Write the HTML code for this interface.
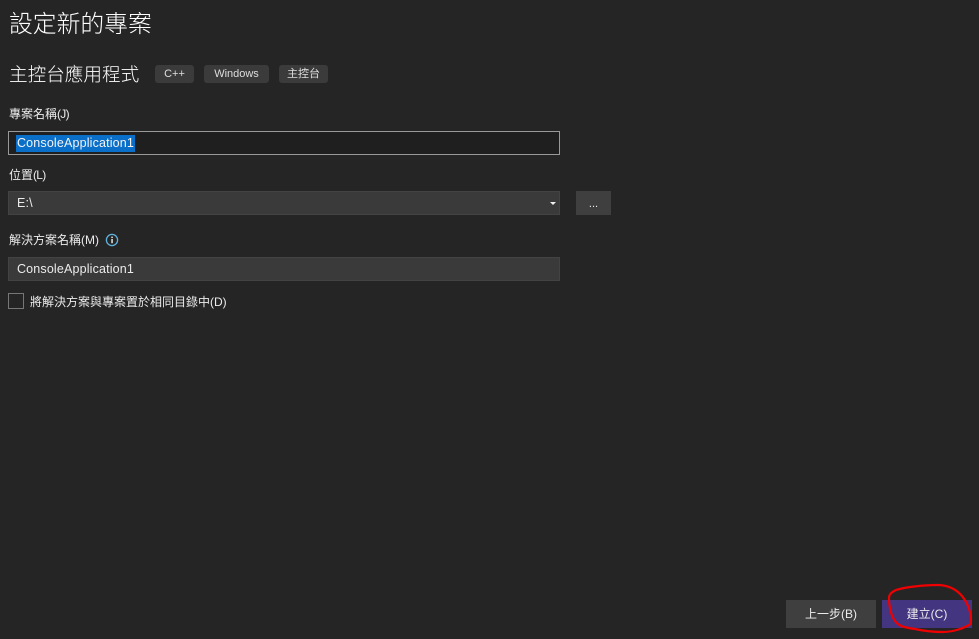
<!DOCTYPE html>
<html lang="zh-Hant">
<head>
<meta charset="utf-8">
<title>設定新的專案</title>
<style>
html,body{margin:0;padding:0;background:#252526;}
body{width:979px;height:639px;position:relative;overflow:hidden;color:#ececec;font-family:"Liberation Sans","Noto Sans CJK TC",sans-serif;font-size:12px;}
.a{position:absolute;white-space:nowrap;line-height:16px;}
.box{position:absolute;box-sizing:border-box;}
.p{letter-spacing:-.7px;}
.tag{position:absolute;top:65px;height:18px;background:#3b3b3c;border-radius:3px;text-align:center;line-height:18px;font-size:11px;color:#dedede;}
.btn{position:absolute;top:600px;height:28px;text-align:center;line-height:28px;color:#ececec;font-size:12px;}
.en{font-size:12.5px;letter-spacing:.16px;}
</style>
</head>
<body>
<div class="a" style="left:9px;top:11px;font-size:23.8px;line-height:28px;font-weight:300;color:#fff;">設定新的專案</div>
<div class="a" style="left:9px;top:64px;font-size:18.6px;line-height:22px;font-weight:300;color:#fff;">主控台應用程式</div>
<div class="tag" style="left:155px;width:39px;">C++</div>
<div class="tag" style="left:204px;width:65px;">Windows</div>
<div class="tag" style="left:279px;width:49px;">主控台</div>

<div class="a" style="left:9px;top:106px;">專案名稱<span class="p">(J)</span></div>
<div class="box" style="left:8px;top:131px;width:552px;height:24px;background:#1f1f1f;border:1px solid #999;"></div>
<div class="a en" style="left:16px;top:135px;height:17px;width:119px;padding-left:1px;box-sizing:border-box;background:#0a6fc9;color:#f4f4f4;line-height:16px;">ConsoleApplication1</div>

<div class="a" style="left:9px;top:167px;">位置<span class="p">(L)</span></div>
<div class="box" style="left:8px;top:191px;width:552px;height:24px;background:#3a3a3b;border:1px solid #434346;"></div>
<div class="a en" style="left:17px;top:195px;">E:\</div>
<div class="box" style="left:550px;top:202px;width:0;height:0;border-left:3px solid transparent;border-right:3px solid transparent;border-top:3px solid #f1f1f1;"></div>
<div class="box" style="left:576px;top:191px;width:35px;height:24px;background:#3f3f40;text-align:center;line-height:27px;font-size:11px;">...</div>

<div class="a" style="left:9px;top:232px;">解決方案名稱(M)</div>
<svg class="box" style="left:105px;top:233px;" width="14" height="14" viewBox="0 0 14 14">
<circle cx="7" cy="7" r="5.6" fill="none" stroke="#5fb4dc" stroke-width="1.3"/>
<rect x="6.3" y="6" width="1.5" height="4.2" fill="#e6e6e6"/>
<rect x="6.3" y="3.6" width="1.5" height="1.5" fill="#e6e6e6"/>
</svg>
<div class="box" style="left:8px;top:257px;width:552px;height:24px;background:#3a3a3b;border:1px solid #434346;"></div>
<div class="a en" style="left:17px;top:261px;">ConsoleApplication1</div>

<div class="box" style="left:8px;top:293px;width:16px;height:16px;background:#252526;border:1px solid #777;"></div>
<div class="a" style="left:30px;top:294px;">將解決方案與專案置於相同目錄中(D)</div>

<div class="btn" style="left:786px;width:90px;background:#3f3f40;">上一步(B)</div>
<div class="btn" style="left:882px;width:90px;background:#43357f;">建立(C)</div>

<svg class="box" style="left:0;top:0;" width="979" height="639" viewBox="0 0 979 639">
<path d="M889 598C889 594 892 592 896 590C905 587 925 585 937 585C948 585 956 589 962 596C967 602 971 612 971 619C971 622 971 624 969 625C962 629 952 632 943 632C934 632 924 631 915 629C908 628 902 627 898 624C893 620 891 614 890 608C889 604 889 601 889 598Z" fill="none" stroke="#f00000" stroke-width="2.2" stroke-linecap="round" stroke-linejoin="round"/>
</svg>
</body>
</html>
